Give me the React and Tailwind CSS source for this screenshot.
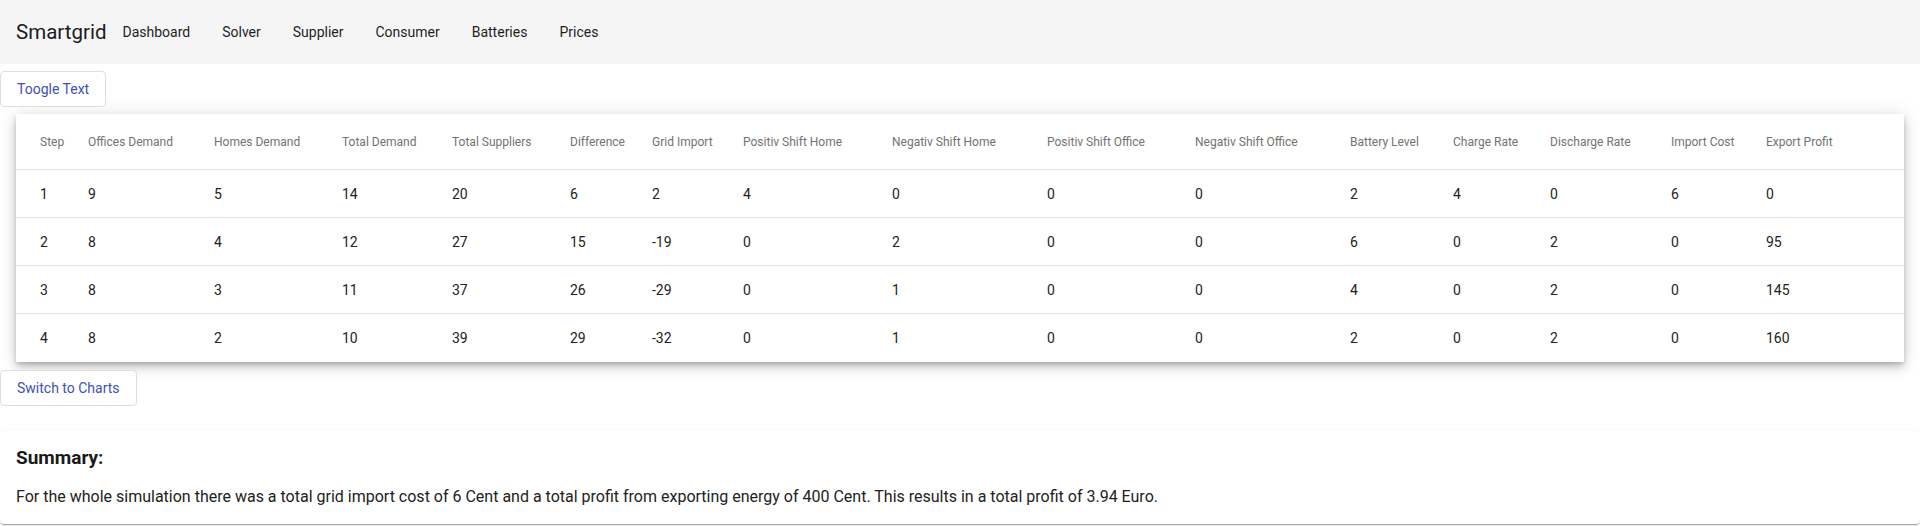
import React from 'react'

const columns = [
  'Step',
  'Offices Demand',
  'Homes Demand',
  'Total Demand',
  'Total Suppliers',
  'Difference',
  'Grid Import',
  'Positiv Shift Home',
  'Negativ Shift Home',
  'Positiv Shift Office',
  'Negativ Shift Office',
  'Battery Level',
  'Charge Rate',
  'Discharge Rate',
  'Import Cost',
  'Export Profit',
]

const rows = [
  [1, 9, 5, 14, 20, 6, 2, 4, 0, 0, 0, 2, 4, 0, 6, 0],
  [2, 8, 4, 12, 27, 15, -19, 0, 2, 0, 0, 6, 0, 2, 0, 95],
  [3, 8, 3, 11, 37, 26, -29, 0, 1, 0, 0, 4, 0, 2, 0, 145],
  [4, 8, 2, 10, 39, 29, -32, 0, 1, 0, 0, 2, 0, 2, 0, 160],
]

const navItems = ['Dashboard', 'Solver', 'Supplier', 'Consumer', 'Batteries', 'Prices']

// same template for header and body rows so the columns line up
const gridCols =
  'grid grid-cols-[48px_126px_128px_110px_118px_82px_91px_149px_155px_148px_155px_103px_97px_121px_95px_1fr] pl-6'

const OutlineButton = ({ children }) => (
  <button className="h-9 px-4 rounded-[4px] border border-[#dedede] bg-white text-sm text-[#3f51b5] leading-none">
    {children}
  </button>
)

export default function App() {
  return (
    <div className="min-h-[526px] bg-white font-['Roboto',sans-serif]">
      {/* Top bar */}
      <header className="h-16 bg-[#f5f5f5] flex items-center pl-4">
        <span className="text-[20.5px] text-[#1c1c1c] leading-none">Smartgrid</span>
        <nav className="flex">
          {navItems.map((item) => (
            <button key={item} className="h-9 px-4 text-sm text-[#1f1f1f]">
              {item}
            </button>
          ))}
        </nav>
      </header>

      <div className="pt-[7px]">
        <OutlineButton>Toogle Text</OutlineButton>
      </div>

      {/* Results table */}
      <div className="mx-4 mt-[7px] bg-white shadow-[0px_3px_5px_-1px_rgba(0,0,0,0.2),0px_6px_10px_0px_rgba(0,0,0,0.14),0px_1px_18px_0px_rgba(0,0,0,0.12)]">
        <div className={`${gridCols} h-14 items-center border-b border-[#e0e0e0]`}>
          {columns.map((col) => (
            <div key={col} className="text-xs text-[#727272] whitespace-nowrap">
              {col}
            </div>
          ))}
        </div>
        {rows.map((row, i) => (
          <div
            key={i}
            className={`${gridCols} h-12 items-center ${i < rows.length - 1 ? 'border-b border-[#e0e0e0]' : ''}`}
          >
            {row.map((val, j) => (
              <div key={j} className="text-sm text-[#222222]">
                {val}
              </div>
            ))}
          </div>
        ))}
      </div>

      <div className="mt-2">
        <OutlineButton>Switch to Charts</OutlineButton>
      </div>

      {/* Summary */}
      <div className="mt-6 rounded-[4px] bg-white px-4 pt-4 pb-[15px] shadow-[0px_2px_1px_-1px_rgba(0,0,0,0.2),0px_1px_1px_0px_rgba(0,0,0,0.14),0px_1px_3px_0px_rgba(0,0,0,0.12)]">
        <h3 className="text-[19px] font-bold leading-6 text-[#1a1a1a]">Summary:</h3>
        <p className="mt-[15px] text-base leading-6 text-[#222222]">
          For the whole simulation there was a total grid import cost of 6 Cent and a total profit from exporting
          energy of 400 Cent. This results in a total profit of 3.94 Euro.
        </p>
      </div>
    </div>
  )
}
